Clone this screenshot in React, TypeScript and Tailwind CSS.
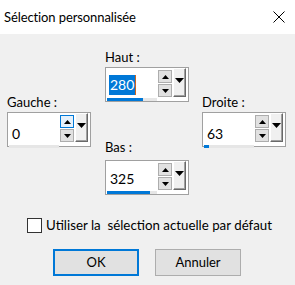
import React from "react";

const FONT = "font-['Lato','Liberation_Sans',sans-serif]";

function UpTri() {
  return (
    <svg width="7" height="4" viewBox="0 0 7 4">
      <path d="M3.5 0 L7 4 L0 4 Z" fill="#000" />
    </svg>
  );
}
function DownTri({ w = 7, h = 4 }: { w?: number; h?: number }) {
  return (
    <svg width={w} height={h} viewBox={`0 0 ${w} ${h}`}>
      <path d={`M0 0 L${w} 0 L${w / 2} ${h} Z`} fill="#000" />
    </svg>
  );
}

function SpinBox({
  value,
  selected = false,
  progress,
  hoverUp = false,
  textTop,
}: {
  value: string;
  selected?: boolean;
  progress: number;
  hoverUp?: boolean;
  textTop: string;
}) {
  return (
    <div className="w-[84px] h-[35px] border border-[#a0a0a0] bg-white flex">
      <div className="w-[52px] flex flex-col">
        <div className={`flex-1 pl-[3px] ${textTop}`}>
          {selected ? (
            <span className="inline-flex items-center h-[20px] bg-[#0078d7] text-white text-[14px] leading-[20px] pl-[1px]">
              {value}
              <span className="ml-[1px] w-[1px] h-[20px] bg-[#d0641c]" />
            </span>
          ) : (
            <span className="inline-block h-[20px] text-black text-[14px] leading-[20px] px-[1px]">
              {value}
            </span>
          )}
        </div>
        <div className="h-[3px] ml-[1px] w-[50px] bg-[#e6e6e6]">
          <div className="h-[3px] bg-[#0078d7]" style={{ width: `${progress}px` }} />
        </div>
      </div>
      <div className="w-[14px] flex flex-col gap-[1px] pt-[2px]">
        <div
          className={`w-[14px] h-[13px] border flex items-center justify-center ${
            hoverUp ? "border-[#0078d7] bg-[#e5f1fb]" : "border-[#adadad] bg-[#e1e1e1]"
          }`}
        >
          <UpTri />
        </div>
        <div className="w-[14px] h-[13px] border border-[#adadad] bg-[#e1e1e1] flex items-center justify-center">
          <DownTri />
        </div>
      </div>
      <div className="ml-[1px] w-[13px] h-[29px] bg-[#f0f0f0] border-l border-t border-l-white border-t-white border-r border-b border-r-[#696969] border-b-[#696969] shadow-[inset_-1px_-1px_0_#a0a0a0] flex items-start justify-center pt-[9px]">
        <DownTri w={9} h={5} />
      </div>
    </div>
  );
}

function Label({ children }: { children: React.ReactNode }) {
  return <div className="h-[20px] leading-[20px] text-[13px] text-black">{children}</div>;
}

export default function App() {
  return (
    <div className={`w-[295px] h-[285px] bg-[#f0f0f0] overflow-hidden ${FONT}`}>
      <div className="h-[34px] bg-white flex items-center justify-between pl-[4px] pr-[10px]">
        <span className="text-[13px] text-black leading-[20px] tracking-[-0.1px]">Sélection personnalisée</span>
        <svg width="12" height="12" viewBox="0 0 12 12">
          <path d="M0.5 0.5 L11.5 11.5 M11.5 0.5 L0.5 11.5" stroke="#000" strokeWidth="1" />
        </svg>
      </div>
      <div className="flex pl-[7px]">
        <div className="w-[84px] pt-[58px] flex flex-col">
          <Label>Gauche :</Label>
          <SpinBox value="0" progress={0} hoverUp textTop="pt-[8px]" />
        </div>
        <div className="w-[84px] ml-[14px] pt-[13px] flex flex-col">
          <Label>Haut :</Label>
          <SpinBox value="280" selected progress={36} textTop="pt-[4px]" />
          <div className="mt-[35px]">
            <Label>Bas :</Label>
          </div>
          <div className="mt-[3px]">
            <SpinBox value="325" progress={43} textTop="pt-[5px]" />
          </div>
        </div>
        <div className="w-[84px] ml-[13px] pt-[58px] flex flex-col">
          <Label>Droite :</Label>
          <SpinBox value="63" progress={5} textTop="pt-[8px]" />
        </div>
      </div>
      <div className="mt-[20px] pl-[27px] h-[20px] flex items-center">
        <div className="shrink-0 w-[15px] h-[15px] border border-[#333] bg-white" />
        <span className="ml-[4px] text-[13.3px] leading-[20px] text-black whitespace-pre">
          Utiliser la  sélection actuelle par défaut
        </span>
      </div>
      <div className="mt-[14px] pl-[53px] flex gap-[16px]">
        <div className="w-[86px] h-[27px] border-2 border-[#0078d7] bg-[#e1e1e1] flex items-center justify-center text-[13px] text-black">
          OK
        </div>
        <div className="w-[86px] h-[27px] border border-[#adadad] bg-[#e1e1e1] flex items-center justify-center text-[13px] text-black">
          Annuler
        </div>
      </div>
    </div>
  );
}
